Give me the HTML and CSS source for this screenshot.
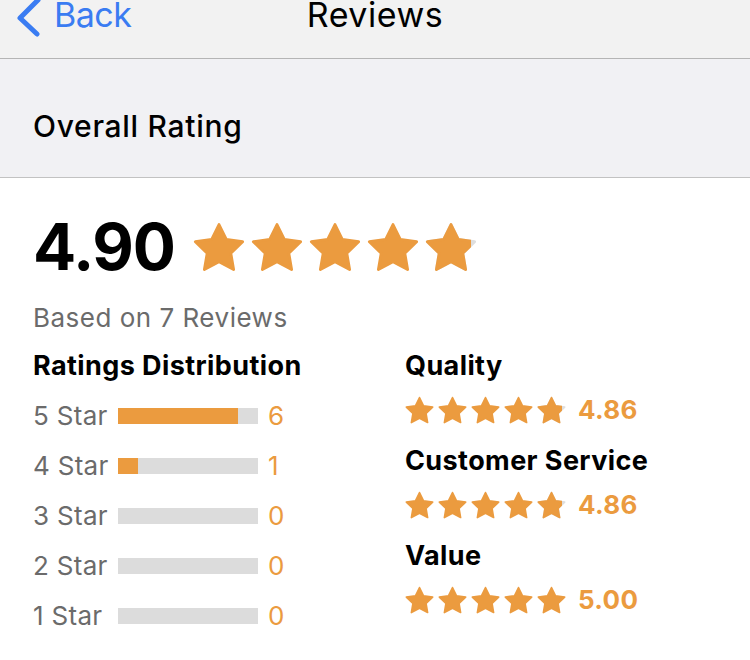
FILE: index.html
```html
<!DOCTYPE html>
<html lang="en">
<head>
    <meta charset="UTF-8">
    <meta name="viewport" content="width=device-width, initial-scale=1.0">
    <title>Reviews</title>
    <link rel="stylesheet" href="styles.css">
</head>
<body>
    <svg class="svg-defs" aria-hidden="true">
        <symbol id="star" viewBox="1 1 22 21">
            <path d="M12 2l3.09 6.26L22 9.27l-5 4.87 1.18 6.88L12 17.77l-6.18 3.25L7 14.14 2 9.27l6.91-1.01L12 2z" fill="currentColor" stroke="currentColor" stroke-width="1.2" stroke-linejoin="round"/>
        </symbol>
    </svg>

    <div class="navbar">
        <a href="#" class="back-link">
            <svg class="chevron" viewBox="0 0 44 36"><path d="M38 0 L20 18 L37 34" fill="none" stroke="currentColor" stroke-width="5" stroke-linecap="round" stroke-linejoin="round"/></svg>
            <span>Back</span>
        </a>
        <h1 class="nav-title">Reviews</h1>
        <span></span>
    </div>

    <div class="section-header">
        <h2>Overall Rating</h2>
    </div>

    <div class="content">
        <div class="overall">
            <span class="overall-score">4.90</span>
            <div class="stars stars-lg">
                <svg class="star"><use href="#star"/></svg>
                <svg class="star"><use href="#star"/></svg>
                <svg class="star"><use href="#star"/></svg>
                <svg class="star"><use href="#star"/></svg>
                <span class="star-partial">
                    <svg class="star star-empty"><use href="#star"/></svg>
                    <span class="star-clip" style="width: 90%"><svg class="star"><use href="#star"/></svg></span>
                </span>
            </div>
        </div>
        <p class="review-count">Based on 7 Reviews</p>

        <div class="breakdown">
            <div class="distribution">
                <h3>Ratings Distribution</h3>
                <div class="dist-row">
                    <span class="dist-label">5 Star</span>
                    <span class="dist-bar"><span class="dist-fill" style="width: 85.7%"></span></span>
                    <span class="dist-count">6</span>
                </div>
                <div class="dist-row">
                    <span class="dist-label">4 Star</span>
                    <span class="dist-bar"><span class="dist-fill" style="width: 14.3%"></span></span>
                    <span class="dist-count">1</span>
                </div>
                <div class="dist-row">
                    <span class="dist-label">3 Star</span>
                    <span class="dist-bar"></span>
                    <span class="dist-count">0</span>
                </div>
                <div class="dist-row">
                    <span class="dist-label">2 Star</span>
                    <span class="dist-bar"></span>
                    <span class="dist-count">0</span>
                </div>
                <div class="dist-row">
                    <span class="dist-label">1 Star</span>
                    <span class="dist-bar"></span>
                    <span class="dist-count">0</span>
                </div>
            </div>

            <div class="categories">
                <h3>Quality</h3>
                <div class="cat-rating">
                    <div class="stars stars-sm">
                        <svg class="star"><use href="#star"/></svg>
                        <svg class="star"><use href="#star"/></svg>
                        <svg class="star"><use href="#star"/></svg>
                        <svg class="star"><use href="#star"/></svg>
                        <span class="star-partial">
                            <svg class="star star-empty"><use href="#star"/></svg>
                            <span class="star-clip" style="width: 86%"><svg class="star"><use href="#star"/></svg></span>
                        </span>
                    </div>
                    <span class="cat-score">4.86</span>
                </div>

                <h3>Customer Service</h3>
                <div class="cat-rating">
                    <div class="stars stars-sm">
                        <svg class="star"><use href="#star"/></svg>
                        <svg class="star"><use href="#star"/></svg>
                        <svg class="star"><use href="#star"/></svg>
                        <svg class="star"><use href="#star"/></svg>
                        <span class="star-partial">
                            <svg class="star star-empty"><use href="#star"/></svg>
                            <span class="star-clip" style="width: 86%"><svg class="star"><use href="#star"/></svg></span>
                        </span>
                    </div>
                    <span class="cat-score">4.86</span>
                </div>

                <h3>Value</h3>
                <div class="cat-rating">
                    <div class="stars stars-sm">
                        <svg class="star"><use href="#star"/></svg>
                        <svg class="star"><use href="#star"/></svg>
                        <svg class="star"><use href="#star"/></svg>
                        <svg class="star"><use href="#star"/></svg>
                        <svg class="star"><use href="#star"/></svg>
                    </div>
                    <span class="cat-score">5.00</span>
                </div>
            </div>
        </div>
    </div>
</body>
</html>
```

FILE: styles.css
```css
body {
    font-family: Inter, "Liberation Sans", sans-serif;
    background-color: #fff;
    color: #000;
    margin: 0;
    padding: 0;
}
.svg-defs {
    position: absolute;
    width: 0;
    height: 0;
    overflow: hidden;
}
.navbar {
    display: grid;
    grid-template-columns: 1fr auto 1fr;
    height: 58px;
    background-color: #f2f2f2;
    border-bottom: 1px solid #b5b5b5;
    overflow: hidden;
}
.back-link {
    display: flex;
    align-items: flex-start;
    color: #3a7cf2;
    text-decoration: none;
    font-size: 34px;
    line-height: 34px;
}
.back-link span {
    margin-top: -2px;
    margin-left: 10px;
    letter-spacing: -0.5px;
}
.chevron {
    width: 44px;
    height: 36px;
    overflow: visible;
}
.nav-title {
    margin: -2px 0 0;
    font-size: 34px;
    line-height: 34px;
    font-weight: 400;
    letter-spacing: 0.5px;
}
.section-header {
    box-sizing: border-box;
    height: 119px;
    padding: 52px 33px 0;
    background-color: #f1f1f4;
    border-bottom: 1px solid #c2c2c2;
}
.section-header h2 {
    margin: 0;
    font-size: 30px;
    line-height: 1;
    font-weight: 500;
    letter-spacing: 0.7px;
}
.content {
    padding: 37px 33px 0;
}
.overall {
    display: flex;
    align-items: center;
    gap: 18px;
}
.overall-score {
    font-size: 64px;
    line-height: 1;
    font-weight: 700;
    letter-spacing: -1.2px;
}
.stars {
    display: flex;
    align-items: center;
    color: #eb9b3f;
}
.star {
    display: block;
}
.stars-lg {
    gap: 6px;
}
.stars-lg .star {
    width: 52px;
    height: 50px;
}
.stars-sm {
    gap: 4px;
}
.stars-sm .star {
    width: 29px;
    height: 28px;
}
.star-partial {
    position: relative;
    display: block;
}
.star-empty {
    color: #dedede;
}
.star-clip {
    position: absolute;
    top: 0;
    left: 0;
    height: 100%;
    overflow: hidden;
}
.review-count {
    margin: 26px 0 0;
    font-size: 26px;
    line-height: 1;
    color: #6b6b6b;
    letter-spacing: 0.5px;
}
.breakdown {
    display: grid;
    grid-template-columns: 372px 1fr;
    margin-top: 22px;
}
.breakdown h3 {
    margin: 0;
    font-size: 27px;
    line-height: 26px;
    font-weight: 700;
    letter-spacing: 0.4px;
}
.distribution h3 {
    margin-bottom: 12px;
}
.dist-row {
    display: flex;
    align-items: center;
    height: 50px;
    font-size: 26px;
    line-height: 50px;
}
.dist-label {
    width: 85px;
    color: #6b6b6b;
    letter-spacing: 0.3px;
}
.dist-bar {
    display: block;
    width: 140px;
    height: 16px;
    background-color: #dcdcdc;
}
.dist-fill {
    display: block;
    height: 100%;
    background-color: #eb9b3f;
}
.dist-count {
    margin-left: 10px;
    color: #eb9b3f;
}
.cat-rating {
    display: flex;
    align-items: center;
    gap: 12px;
    margin: 17px 0 24px;
}
.cat-score {
    font-size: 26px;
    line-height: 1;
    font-weight: 700;
    color: #eb9b3f;
    letter-spacing: 0.3px;
}
```
